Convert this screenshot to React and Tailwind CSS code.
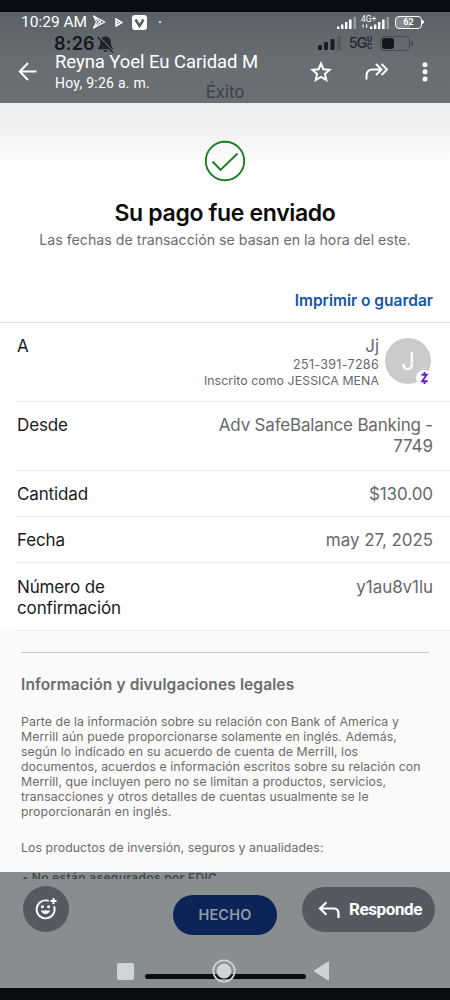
import React from "react";

const legalLines = [
  "Parte de la información sobre su relación con Bank of America y",
  "Merrill aún puede proporcionarse solamente en inglés. Además,",
  "según lo indicado en su acuerdo de cuenta de Merrill, los",
  "documentos, acuerdos e información escritos sobre su relación con",
  "Merrill, que incluyen pero no se limitan a productos, servicios,",
  "transacciones y otros detalles de cuentas usualmente se le",
  "proporcionarán en inglés.",
];

function SignalBars() {
  return (
    <svg width="20" height="12" viewBox="0 0 20 12" fill="#fff">
      <rect x="0" y="9.5" width="2.4" height="2.5" />
      <rect x="4" y="7.5" width="2.4" height="4.5" />
      <rect x="8" y="5" width="2.4" height="7" />
      <rect x="12" y="2.5" width="2.6" height="9.5" />
      <rect x="16.5" y="0" width="2.6" height="12" fill="#94999d" />
    </svg>
  );
}

function StatusBar() {
  return (
    <div className="flex h-[20px] items-center pl-[21px] pr-[26px] font-[family-name:Roboto,sans-serif] text-white">
      <span className="w-[71px] whitespace-nowrap text-[15.5px] leading-[20px]">10:29 AM</span>
      <svg width="14" height="14" viewBox="0 0 14 14" fill="none" stroke="#fff" strokeWidth="1.1" strokeLinejoin="round">
        <path d="M1.5 1 12.8 7 1.5 13 4.5 7Z" />
        <path d="M1.5 1 9.5 8.8M1.5 13 9.5 5.2" />
      </svg>
      <svg className="ml-[9px]" width="8" height="9" viewBox="0 0 8 9" fill="none" stroke="#fff" strokeWidth="1.5">
        <path d="M1 1v7l6-3.5z" />
        <path d="M1 4.5h3" />
      </svg>
      <svg className="ml-[9px]" width="15" height="15" viewBox="0 0 15 15">
        <rect width="15" height="15" rx="3" fill="#fff" />
        <path d="M3.5 4.5 7.5 11 11.5 4.5" fill="none" stroke="#555b60" strokeWidth="2.4" />
      </svg>
      <span className="ml-[12px] size-[2px] rounded-full bg-white" />
      <div className="ml-auto flex items-end">
        <SignalBars />
        <div className="ml-[4px] flex h-[14px] w-[15px] flex-col justify-between">
          <span className="whitespace-nowrap text-[8.5px] leading-[8px]">4G+</span>
          <svg className="mb-[1px] ml-[1px]" width="6" height="4" viewBox="0 0 6 4" fill="#fff">
            <path d="M0 1.5 1.500 0v4H.8V2zM6 2.5 4 4V0h.8v2z" />
          </svg>
        </div>
        <div className="-ml-[6px]">
          <SignalBars />
        </div>
      </div>
      <div className="ml-[5px] flex items-center">
        <div className="flex h-[13px] w-[27px] items-center justify-center rounded-[4px] border-[1.5px] border-white bg-[linear-gradient(90deg,#858a8e_58%,transparent_58%)] text-[9px] font-bold leading-none">
          62
        </div>
        <span className="h-[4px] w-[2px] rounded-r bg-white" />
      </div>
    </div>
  );
}

/* barra de estado de la captura que queda debajo del encabezado */
function InnerStatus() {
  return (
    <div className="absolute inset-x-0 top-[20px] text-[#20242b]">
      <div className="flex h-[22px] items-center pl-[54px] pr-[37px]">
        <span className="mt-[1px] w-[43px] text-[18px] font-semibold leading-[22px] tracking-[0.2px] text-[#14171d]">8:26</span>
        <svg className="mt-[2px]" width="17" height="17" viewBox="0 0 16 16" fill="#20242b">
          <path d="M8 .5c3.500 0 5 2.500 5 5.500 0 3.500 1.500 4.500 2 5.500v1H1v-1C1.500 10.500 3 9.500 3 6c0-3 1.500-5.500 5-5.500zM6 13.300h4c-.3 2.300-3.700 2.300-4 0z" />
          <path d="M1.500 0 15.500 14.500" stroke="#62676b" strokeWidth="1.2" />
          <path d="M.5 1 15 15.500" stroke="#20242b" strokeWidth="1.300" />
        </svg>
        <svg className="ml-auto" width="23" height="14" viewBox="0 0 23 14" fill="#181c23">
          <rect x="0" y="9" width="4" height="5" rx="1" />
          <rect x="6" y="6" width="4" height="8" rx="1" />
          <rect x="12.5" y="3" width="4" height="11" rx="1" />
          <rect x="19" y="0" width="4" height="14" rx="1" fill="#54585d" />
        </svg>
        <span className="ml-[8px] w-[18px] text-[14px] font-medium leading-none tracking-[-0.9px]">5G</span>
        <span className="flex w-[6px] flex-col text-[7px] font-bold leading-[7px]">
          <span>U</span>
          <span>C</span>
        </span>
        <div className="ml-[7px] flex h-[15px] w-[30px] items-center rounded-[5px] border border-[#464a50] pl-[1px]">
          <span className="h-[11px] w-[12px] rounded-[3px] bg-[#14171d]" />
        </div>
        <span className="ml-[1px] h-[5px] w-[2px] rounded-r bg-[#464a50]" />
      </div>
      <p className="mt-[27px] text-center text-[17px] leading-[22px] tracking-[-0.1px] text-[#3c4149]">Éxito</p>
    </div>
  );
}

function Header() {
  return (
    <header className="relative h-[91px] bg-[linear-gradient(#5b6066,#686d71_50%,#6a6f73)]">
      <InnerStatus />
      <div className="relative">
        <StatusBar />
        <div className="flex h-[71px] items-start pl-[18px] font-[family-name:Roboto,sans-serif] text-white">
          <svg className="mt-[29px]" width="20" height="20" viewBox="0 0 20 20" fill="none" stroke="#fff" strokeWidth="2">
            <path d="M18.5 10.5H2M10 2 1.800 10.5 10 19" />
          </svg>
          <div className="ml-[17px] mt-[19px] flex flex-col whitespace-nowrap">
            <span className="text-[18.5px] leading-[22px] tracking-[-0.06px]">Reyna Yoel Eu Caridad M</span>
            <span className="text-[14px] leading-[20px] tracking-[0.25px]">Hoy, 9:26 a. m.</span>
          </div>
          <div className="ml-auto mt-[29px] flex items-center pr-[22px]">
            <svg width="22" height="22" viewBox="0 0 22 22" fill="none" stroke="#fff" strokeWidth="2">
              <path d="M11 2.500 13.400 8.200 19.600 8.800 14.900 12.900 16.300 19 11 15.800 5.700 19 7.100 12.900 2.400 8.800 8.600 8.200Z" />
            </svg>
            <svg className="ml-[33px]" width="24" height="20" viewBox="0 0 24 20" fill="none" stroke="#fff" strokeWidth="2">
              <path d="M1.500 17.500V14c0-4 2-6.500 6-6.500h8M11 2l5.500 5.500L11 13M16.500 2 22 7.500 16.500 13" />
            </svg>
            <svg className="ml-[33px]" width="6" height="20" viewBox="0 0 6 20" fill="#fff">
              <circle cx="3" cy="2.700" r="2.500" />
              <circle cx="3" cy="9.800" r="2.500" />
              <circle cx="3" cy="17" r="2.500" />
            </svg>
          </div>
        </div>
      </div>
    </header>
  );
}

function Row({ label, children, className }) {
  return (
    <div className={`ml-[17px] flex justify-between border-b border-[#ececec] pr-[17px] text-[17px] leading-[21px] ${className}`}>
      <span className="w-[150px] tracking-[-0.14px] text-[#1a1a1a]">{label}</span>
      <div className="text-right tracking-[-0.06px] text-[#68686a]">{children}</div>
    </div>
  );
}

function Details() {
  return (
    <section className="border-t border-[#dedede] bg-white">
      <Row label="A" className="h-[79px] pt-[13px]">
        <div className="-mr-[15px] flex">
          <div className="whitespace-nowrap pr-[6px]">
            <p className="text-[17px] leading-[20px]">Jj</p>
            <p className="pt-[1px] text-[12.5px] leading-[16px] tracking-[0.32px]">251-391-7286</p>
            <p className="text-[12.3px] leading-[16px] tracking-[0.08px]">Inscrito como JESSICA MENA</p>
          </div>
          <div className="relative mr-[17px] mt-[2px] flex size-[46px] items-center justify-center rounded-full bg-[#cbcbcb] text-[24px] text-white">
            J
            <span className="absolute -bottom-[2px] -right-[1px] flex size-[16px] items-center justify-center rounded-full bg-white">
              <svg width="7" height="12" viewBox="0 0 7 12" fill="none" stroke="#6a1fc0" strokeWidth="1.9">
                <path d="M.5 2.800h5.200L1.200 9.200h5.500M3.500 0v2.500M3.500 9.500V12" />
              </svg>
            </span>
          </div>
        </div>
      </Row>
      <Row label="Desde" className="h-[69px] pt-[13px]">
        <p className="tracking-[-0.18px]">Adv SafeBalance Banking -</p>
        <p>7749</p>
      </Row>
      <Row label="Cantidad" className="h-[46px] pt-[13px]">$130.00</Row>
      <Row label="Fecha" className="h-[46px] pt-[13px]">may 27, 2025</Row>
      <Row label="Número de confirmación" className="h-[68px] pt-[14px]">y1au8v1lu</Row>
    </section>
  );
}

function Legal() {
  return (
    <section className="flex-1 overflow-hidden bg-[#fafafa] px-[21px] pt-[21px]">
      <div className="border-t border-[#c9c9c9]" />
      <h2 className="mt-[22px] text-[15.5px] font-semibold leading-[20px] tracking-[0.12px] text-[#6b6b6b]">Información y divulgaciones legales</h2>
      <div className="mt-[19px] whitespace-nowrap text-[12.3px] leading-[15px] tracking-[0.08px] text-[#6f6b66]">
        {legalLines.map((line) => (
          <p key={line}>{line}</p>
        ))}
        <p className="mt-[21px]">Los productos de inversión, seguros y anualidades:</p>
      </div>
    </section>
  );
}

function Footer() {
  return (
    <footer className="flex h-[116px] flex-col bg-[#888d8f]">
      <div className="h-[7px] overflow-hidden pl-[22px]">
        <p className="-mt-[2px] whitespace-nowrap text-[12px] font-semibold leading-[15px] tracking-[0.32px] text-[#44484b]">• No están asegurados por FDIC</p>
      </div>
      <div className="flex h-[67px] items-start pl-[23px] pr-[15px]">
        <button className="mt-[7px] flex size-[46px] items-center justify-center rounded-full bg-[#555a60]">
          <svg width="22" height="22" viewBox="0 0 22 22" fill="none">
            <path d="M13 2.700A9 9 0 1 0 19.300 9" stroke="#fff" strokeWidth="1.9" strokeLinecap="round" />
            <circle cx="7.400" cy="8.800" r="1.500" fill="#fff" />
            <circle cx="13.600" cy="8.800" r="1.500" fill="#fff" />
            <path d="M6 12.500h9c-1 4.500-8 4.500-9 0z" fill="#fff" />
            <path d="M18.500 0v6M15.500 3h6" stroke="#fff" strokeWidth="1.9" />
          </svg>
        </button>
        <button className="ml-[104px] mt-[16px] h-[40px] w-[104px] rounded-full bg-[#0b2455] text-[14.5px] font-semibold tracking-[0.2px] text-[#8f99aa]">
          HECHO
        </button>
        <button className="ml-auto mt-[8px] flex h-[45px] w-[133px] items-center rounded-full bg-[#555a60] pl-[16px] font-[family-name:Roboto,sans-serif] text-[17px] font-bold tracking-[-0.4px] text-white">
          <svg width="22" height="18" viewBox="0 0 22 18" fill="none" stroke="#fff" strokeWidth="2.2">
            <path d="M20.500 17v-4.500c0-3-1.500-5-4.500-5H2.500M8.500 1.200 2 7.500l6.500 6.300" />
          </svg>
          <span className="ml-[9px]">Responde</span>
        </button>
      </div>
      {/* navegación de Android sobre el indicador de inicio */}
      <div className="relative flex h-[42px] items-center justify-between pb-[8px] pl-[117px] pr-[120px]">
        <span className="absolute left-[145px] top-[28px] h-[5px] w-[161px] rounded-full bg-[#0a0e11]" />
        <span className="relative mt-[16px] size-[17px] rounded-[2px] bg-[#d2d3d6]" />
        <svg className="relative mt-[16px]" width="24" height="24" viewBox="0 0 24 24">
          <circle cx="12" cy="12" r="10.7" fill="none" stroke="#d2d3d6" strokeWidth="1.8" />
          <circle cx="12" cy="12" r="7.5" fill="#d2d3d6" />
        </svg>
        <svg className="relative mt-[16px]" width="17" height="20" viewBox="0 0 17 20" fill="#d2d3d6">
          <path d="M15.500.8v18.400L1 10z" stroke="#d2d3d6" strokeLinejoin="round" />
        </svg>
      </div>
    </footer>
  );
}

export default function App() {
  return (
    <div className="flex h-[1000px] w-[450px] flex-col overflow-hidden bg-[#070d11] pb-[12px] pt-[12px] font-[family-name:Inter,sans-serif]">
      <Header />
      <main className="flex min-h-0 flex-1 flex-col bg-white">
        <section className="h-[219px] bg-[linear-gradient(#ebedee,#f3f3f3_32px,#ffffff_64px)] pt-[37px]">
          <svg className="mx-auto" width="42" height="42" viewBox="0 0 42 42" fill="none" stroke="#16801f" strokeWidth="1.9">
            <circle cx="21" cy="21" r="19.2" />
            <path d="M8.500 21.500 16.500 30 33.500 13.500" />
          </svg>
          <h1 className="mt-[16px] text-center text-[23px] font-semibold leading-[30px] tracking-[-0.35px] text-[#0c0c0c]">Su pago fue enviado</h1>
          <p className="mt-[2px] text-center text-[14.2px] leading-[20px] text-[#6d6d6f]">
            Las fechas de transacción se basan en la hora del este.
          </p>
          <p className="mt-[41px] pr-[17px] text-right text-[15.5px] font-semibold leading-[20px] text-[#1656a6]">Imprimir o guardar</p>
        </section>
        <Details />
        <Legal />
      </main>
      <Footer />
    </div>
  );
}
